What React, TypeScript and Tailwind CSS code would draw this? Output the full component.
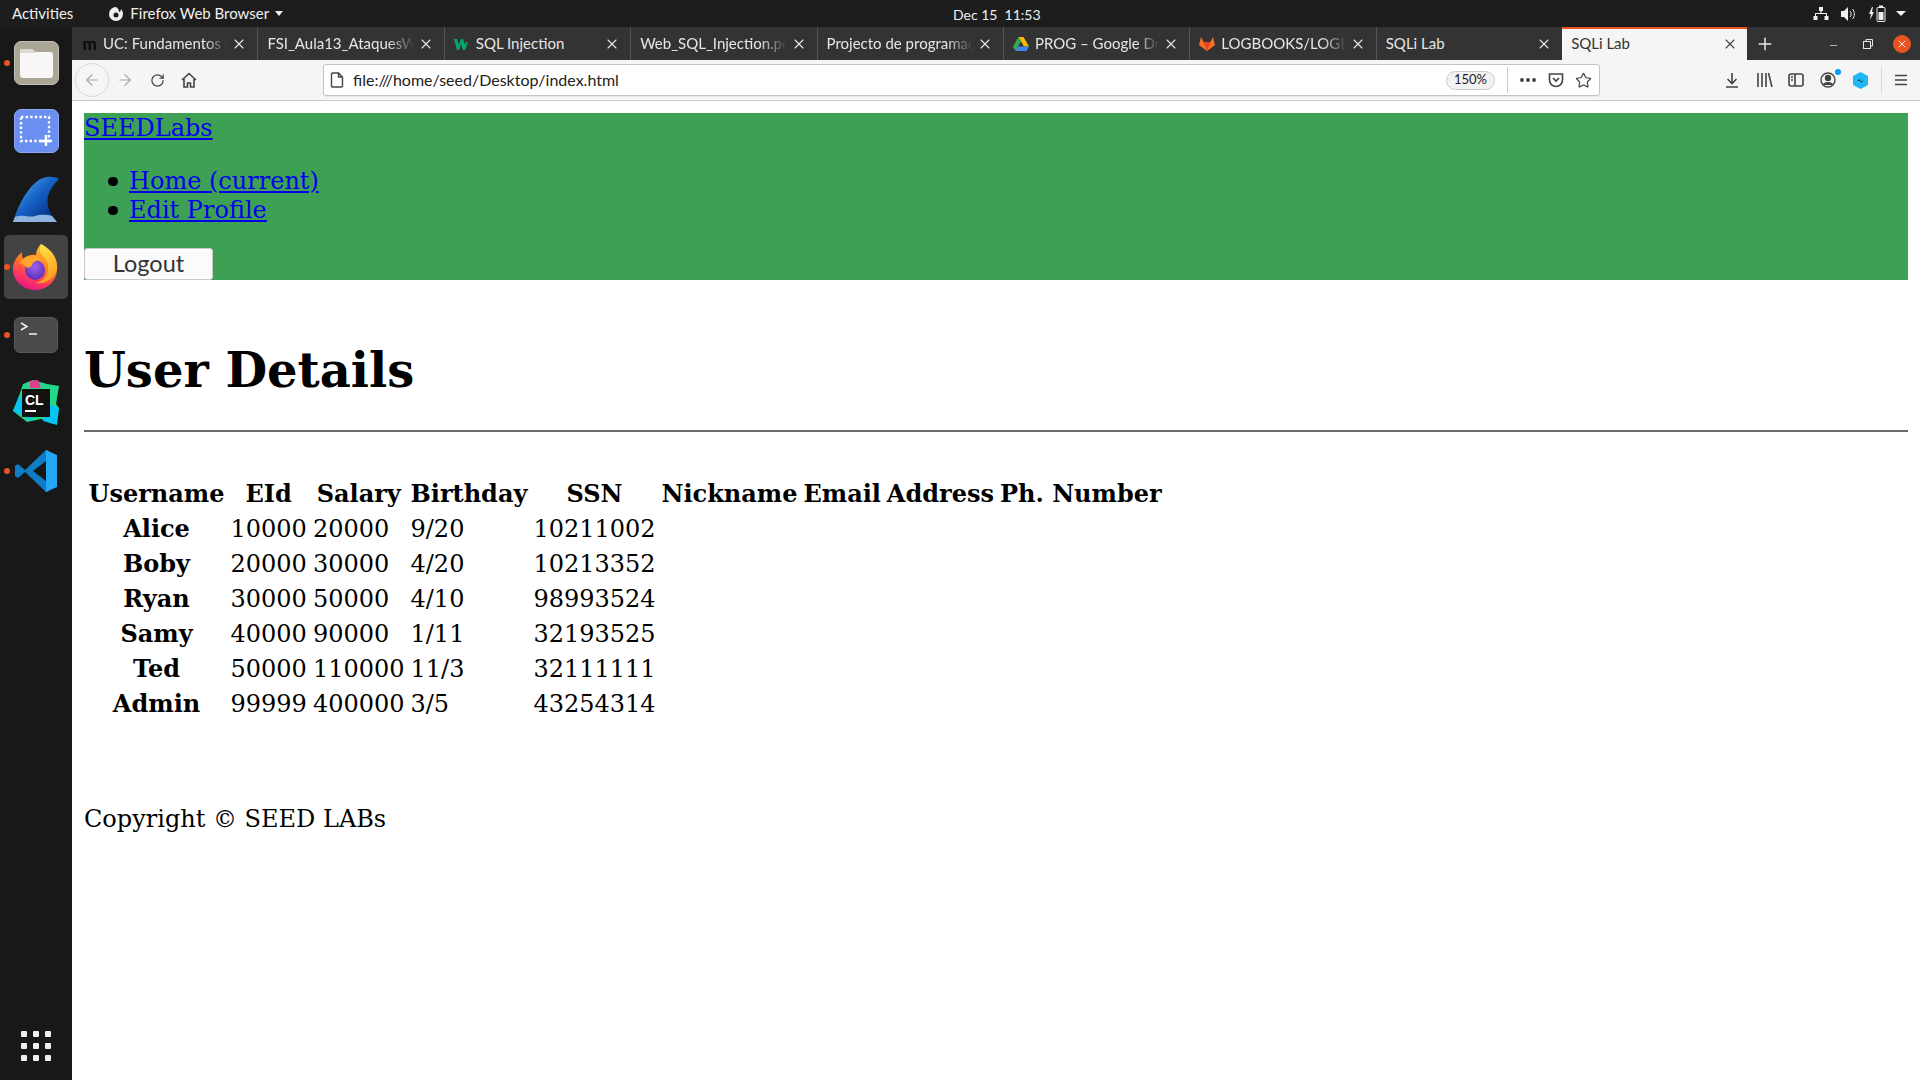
import { ArrowLeft, ArrowRight, RotateCw, Plus, X, Star, Minus } from 'lucide-react'

const uiFont = "font-['Lato','Noto_Sans',sans-serif]"

const FirefoxLogo = ({ size = 46 }: { size?: number }) => (
  <svg width={size} height={size} viewBox="0 0 46 46">
    <defs>
      <linearGradient id="ffOuter" x1="0.75" y1="0.05" x2="0.35" y2="1">
        <stop offset="0" stopColor="#ffc52e" />
        <stop offset="0.45" stopColor="#ff7a1f" />
        <stop offset="0.75" stopColor="#ff3a5c" />
        <stop offset="1" stopColor="#e31587" />
      </linearGradient>
      <linearGradient id="ffTail" x1="0.3" y1="0" x2="0.6" y2="1">
        <stop offset="0" stopColor="#ffe34a" />
        <stop offset="1" stopColor="#ff9a1f" />
      </linearGradient>
      <radialGradient id="ffGlobe" cx="0.5" cy="0.35" r="0.65">
        <stop offset="0" stopColor="#9a62ec" />
        <stop offset="1" stopColor="#5b2fb8" />
      </radialGradient>
    </defs>
    <path d="M28 0c8 5 16 13 16 25 0 12-10 21-22 21S0 37 0 25C0 18 4 12 9 8c0 3 0 5 1 7 3-3 8-5 13-4 0-4 2-8 5-11z" fill="url(#ffOuter)" />
    <circle cx="22" cy="26" r="10" fill="url(#ffGlobe)" />
    <path d="M28 0c-2 5-1 9 2 12 4 4 6 9 5 14-1 7-6 12-13 13 10 2 20-5 22-14 1-9-4-19-16-25z" fill="url(#ffTail)" />
    <path d="M7 18c3-5 10-7 15-6 3 1 6 3 7 5-4-1-7 0-9 2-1 1-2 2-1 3l-4 2c-3-2-6-4-8-6z" fill="#ffa52a" />
  </svg>
)

const DockIcons = [
  {
    dot: true,
    icon: (
      <div className="w-[45px] h-[44px] rounded-[7px] bg-[#aaa595] border border-[#c3bfb2] flex items-center justify-center">
        <svg width="33" height="29" viewBox="0 0 33 29">
          <path d="M2 0h10l3 3h15a3 3 0 0 1 3 3v20a3 3 0 0 1-3 3H3a3 3 0 0 1-3-3V2a2 2 0 0 1 2-2z" fill="#f8f7f5" />
          <path d="M0 2a2 2 0 0 1 2-2h10l3 3v1H0z" fill="#dcd8cd" />
        </svg>
      </div>
    ),
  },
  {
    dot: false,
    icon: (
      <div className="w-[45px] h-[44px] rounded-[7px] bg-[#6a8ff0] border border-[#8aa8f4] flex items-center justify-center">
        <svg width="34" height="32" viewBox="0 0 34 32">
          <rect x="2" y="2" width="28" height="24" fill="none" stroke="#fff" strokeWidth="2.4" strokeDasharray="2.4 2.2" />
          <path d="M27 20v11M21 26h12" stroke="#fff" strokeWidth="2.4" />
        </svg>
      </div>
    ),
  },
  {
    dot: false,
    icon: (
      <svg width="46" height="46" viewBox="0 0 46 46">
        <defs>
          <linearGradient id="sharkFin" x1="0.1" y1="0.15" x2="0.75" y2="0.8">
            <stop offset="0" stopColor="#4c9cec" />
            <stop offset="0.55" stopColor="#1560c4" />
            <stop offset="1" stopColor="#0a3a90" />
          </linearGradient>
        </defs>
        <path d="M46 3C42 0 30-1 22 7 12 16 5 30 0 46h44C37 38 33 30 35 20c2-7 6-12 11-17z" fill="url(#sharkFin)" />
        <path d="M2 41c8-3 14 1 20-1 7-2 13-1 17 0l5 6H0z" fill="#8fb4de" />
      </svg>
    ),
  },
  { dot: true, active: true, icon: <FirefoxLogo /> },
  {
    dot: true,
    icon: (
      <div className="w-[44px] h-[36px] rounded-[6px] bg-[#4a4a4a] border border-[#5a5a5a] relative">
        <svg width="24" height="16" viewBox="0 0 24 16" className="absolute left-[5px] top-[4px]">
          <path d="M1 1l6 3.5L1 8" fill="none" stroke="#f2f2f2" strokeWidth="1.5" />
          <path d="M9 12h8" stroke="#f2f2f2" strokeWidth="1.5" />
        </svg>
      </div>
    ),
  },
  {
    dot: false,
    icon: (
      <svg width="46" height="46" viewBox="0 0 46 46">
        <path d="M10 4L20 0l14 4 12 2-3 18 3 4-4 16-14-5-14 3L0 31 6 16z" fill="#21d789" />
        <path d="M0 31L6 16l8 10 6 15z" fill="#07c3f2" />
        <path d="M30 41l14 4 2-17-10-4z" fill="#07c3f2" />
        <path d="M17 1l8-1 3 8H17z" fill="#e0408f" />
        <rect x="9" y="9" width="28" height="28" fill="#111" />
        <text x="12" y="25" fill="#fff" fontSize="14" fontWeight="700" fontFamily="Liberation Sans, sans-serif">CL</text>
        <rect x="12" y="30" width="11" height="2" fill="#fff" />
      </svg>
    ),
  },
  {
    dot: true,
    icon: (
      <svg width="42" height="42" viewBox="0 0 42 42">
        <path d="M31 0L10 20 3 14 0 16v10l3 2 7-6 21 20 3-1V1z" fill="#0f7cc4" />
        <path d="M31 11v20L18 21z" fill="#161616" />
        <path d="M31 0l11 5v32l-11 5z" fill="#24a8f5" />
      </svg>
    ),
  },
]

const FaviconW3 = () => (
  <svg width="16" height="12" viewBox="0 0 16 12">
    <path d="M0 1h3l2 6 2-6h2l2 6 1-3h2l-3 8h-2L7 6l-2 6H3z" fill="#04aa6d" />
  </svg>
)

const FaviconDrive = () => (
  <svg width="16" height="14" viewBox="0 0 16 14">
    <path d="M5.5 0h5L16 9.5h-5z" fill="#fbbc04" />
    <path d="M5.5 0L0 9.5 2.5 14l5.5-9.5z" fill="#34a853" />
    <path d="M2.5 14h11L16 9.5H5z" fill="#4285f4" />
  </svg>
)

const FaviconGitlab = () => (
  <svg width="16" height="15" viewBox="0 0 16 15">
    <path d="M8 15L0 9l2-8 2.5 5h7L14 1l2 8z" fill="#fc6d26" />
    <path d="M8 15L4.5 6h7z" fill="#e24329" />
  </svg>
)

const FaviconMoodle = () => (
  <span className="font-bold text-[17px] leading-none text-[#0a0a0a] tracking-[-1px]">m</span>
)

const tabs = [
  { title: 'UC: Fundamentos de', icon: <FaviconMoodle /> },
  { title: 'FSI_Aula13_AtaquesWeb' },
  { title: 'SQL Injection', icon: <FaviconW3 />, noFade: true },
  { title: 'Web_SQL_Injection.pdf' },
  { title: 'Projecto de programação' },
  { title: 'PROG – Google Drive', icon: <FaviconDrive /> },
  { title: 'LOGBOOKS/LOGBOOK', icon: <FaviconGitlab /> },
  { title: 'SQLi Lab', noFade: true },
]

const users = [
  ['Alice', '10000', '20000', '9/20', '10211002'],
  ['Boby', '20000', '30000', '4/20', '10213352'],
  ['Ryan', '30000', '50000', '4/10', '98993524'],
  ['Samy', '40000', '90000', '1/11', '32193525'],
  ['Ted', '50000', '110000', '11/3', '32111111'],
  ['Admin', '99999', '400000', '3/5', '43254314'],
]

const headers = ['Username', 'EId', 'Salary', 'Birthday', 'SSN', 'Nickname', 'Email Address', 'Ph. Number']

const TopBar = () => (
  <div className={`h-[27px] bg-[#1d1d1d] text-[#f0f0f0] flex items-center text-[15px] relative ${uiFont}`}>
    <span className="ml-[12px]">Activities</span>
    <svg width="16" height="16" viewBox="0 0 16 16" className="ml-[35px]">
      <path d="M8 1a7 7 0 1 0 7 7c0-2-1-4-2-5 0 2-1 3-2 3 0-2-1-4-3-5z" fill="#f0f0f0" />
      <circle cx="8" cy="9" r="2.5" fill="#1d1d1d" />
    </svg>
    <span className="ml-[6px]">Firefox Web Browser</span>
    <span className="ml-[6px] w-0 h-0 border-x-[4.5px] border-x-transparent border-t-[5px] border-t-[#f0f0f0]" />
    <span className="absolute left-[953px] top-[4px] text-[14px]">Dec 15&nbsp; 11:53</span>
    <div className="ml-auto flex items-center gap-[11px] pr-[14px]">
      <svg width="16" height="16" viewBox="0 0 16 16" fill="#f0f0f0">
        <path d="M6 1h4v4H8.6v2H14v3h1.5v4h-4v-4H13V8H3v2h1.5v4h-4v-4H2V7h5.4V5H6z" />
      </svg>
      <svg width="17" height="16" viewBox="0 0 17 16">
        <path d="M1 5h3l4-4v14l-4-4H1z" fill="#f0f0f0" />
        <path d="M10 5c1.5 1.5 1.5 4.500 0 6M12.500 3c2.500 2.500 2.500 7.500 0 10" fill="none" stroke="#f0f0f0" strokeWidth="1" />
      </svg>
      <svg width="20" height="18" viewBox="0 0 20 18" className="-mr-[3px]">
        <path d="M4 2L1 9h2l-1 6 4-8H4l1-5z" fill="#f0f0f0" />
        <rect x="9" y="2.500" width="8" height="14" rx="1" fill="none" stroke="#f0f0f0" />
        <rect x="11" y="0.500" width="4" height="2" fill="#f0f0f0" />
        <rect x="10.500" y="7" width="5" height="8" fill="#f0f0f0" />
      </svg>
      <span className="w-0 h-0 border-x-[5px] border-x-transparent border-t-[5px] border-t-[#f0f0f0]" />
    </div>
  </div>
)

const Dock = () => (
  <div className="w-[72px] shrink-0 bg-[#181818] flex flex-col pt-[2px]">
    {DockIcons.map((item, i) => (
      <div key={i} className="relative h-[68px] flex items-center justify-center">
        {item.active && <div className="absolute left-[4px] top-[2px] w-[64px] h-[64px] rounded-[5px] bg-[#434343]" />}
        {item.dot && <span className="absolute left-[4px] top-[31px] w-[6px] h-[6px] rounded-full bg-[#e9541f]" />}
        <div className="relative">{item.icon}</div>
      </div>
    ))}
    <div className="mt-auto mb-[19px] grid grid-cols-3 gap-[6px] w-[30px] mx-auto">
      {Array.from({ length: 9 }).map((_, i) => (
        <span key={i} className="w-[6px] h-[6px] rounded-[1px] bg-[#f0f0f0]" />
      ))}
    </div>
  </div>
)

const TabBar = () => (
  <div className={`h-[33px] bg-[#333333] flex items-stretch text-[15px] ${uiFont}`}>
    {tabs.map((tab, i) => (
      <div key={i} className="w-[186.4px] shrink-0 flex items-center pl-[9px] pr-[10px] border-r border-[#555555] text-[#e6e6e6]">
        {tab.icon && <span className="w-[16px] mr-[6px] flex items-center justify-center">{tab.icon}</span>}
        <span className={`flex-1 whitespace-nowrap overflow-hidden ${tab.noFade ? '' : '[mask-image:linear-gradient(to_right,black_82%,transparent)]'}`}>
          {tab.title}
        </span>
        <X size={16} strokeWidth={1.6} className="ml-[4px] text-[#e6e6e6]" />
      </div>
    ))}
    <div className="w-[185px] shrink-0 -ml-[1px] flex items-center pl-[9px] pr-[9px] bg-[#f5f5f5] border-t-[2px] border-[#e9541f] text-[#333333]">
      <span className="flex-1 whitespace-nowrap -mt-[2px]">SQLi Lab</span>
      <X size={16} strokeWidth={1.6} className="text-[#444444] -mt-[2px]" />
    </div>
    <div className="flex items-center pl-[8px] text-[#e6e6e6]">
      <Plus size={20} strokeWidth={1.8} />
    </div>
    <div className="ml-auto flex items-center pr-[9px] text-[#e6e6e6]">
      <Minus size={11} strokeWidth={1.5} className="mr-[24px] mt-[3px]" />
      <svg width="10" height="10" viewBox="0 0 10 10" className="mr-[20px]">
        <rect x="0.500" y="2.500" width="7" height="7" fill="none" stroke="#e6e6e6" />
        <path d="M3 2.500V0.500h6.500V7H8" fill="none" stroke="#e6e6e6" />
      </svg>
      <span className="w-[18px] h-[18px] rounded-full bg-[#e9541f] flex items-center justify-center">
        <X size={12} strokeWidth={1.8} className="text-white" />
      </span>
    </div>
  </div>
)

const NavBar = () => (
  <div className={`h-[41px] bg-[#f5f5f5] border-b border-[#c9c9c9] flex items-center text-[#444444] ${uiFont}`}>
    <span className="ml-[3px] w-[34px] h-[34px] rounded-full border border-[#d8d8d8] flex items-center justify-center">
      <ArrowLeft size={18} strokeWidth={1.6} className="text-[#a8a8a8]" />
    </span>
    <span className="w-[32px] flex justify-center">
      <ArrowRight size={18} strokeWidth={1.6} className="text-[#a8a8a8]" />
    </span>
    <span className="w-[32px] flex justify-center">
      <RotateCw size={15} strokeWidth={2} />
    </span>
    <span className="w-[32px] flex justify-center">
      <svg width="16" height="16" viewBox="0 0 16 16" fill="none" stroke="#444444" strokeWidth="1.6">
        <path d="M1 8l7-6.500L15 8M3 7v8h3.500v-4h3v4H13V7" />
      </svg>
    </span>
    <div className="ml-[118px] w-[1277px] h-[32px] bg-white border border-[#c4c4c4] rounded-[3px] flex items-center shadow-[0_1px_1px_rgba(0,0,0,0.06)]">
      <svg width="14" height="16" viewBox="0 0 14 16" fill="none" stroke="#444444" strokeWidth="1.4" className="ml-[6px]">
        <path d="M2.500 1h6L12.500 5v9a1 1 0 0 1-1 1h-9a1 1 0 0 1-1-1V2a1 1 0 0 1 1-1zM8.500 1v4h4" />
      </svg>
      <span className="ml-[9px] text-[16px] text-[#222222]">file:///home/seed/Desktop/index.html</span>
      <span className="ml-auto w-[49px] h-[19px] rounded-full border border-[#cccccc] bg-[#f2f2f2] text-[13px] flex items-center justify-center text-[#222222]">150%</span>
      <span className="w-px h-[26px] bg-[#c9c9c9] ml-[12px]" />
      <span className="ml-[12px] flex gap-[2px]">
        <i className="w-[4px] h-[4px] rounded-full bg-[#444444]" />
        <i className="w-[4px] h-[4px] rounded-full bg-[#444444]" />
        <i className="w-[4px] h-[4px] rounded-full bg-[#444444]" />
      </span>
      <svg width="16" height="16" viewBox="0 0 16 16" fill="none" stroke="#444444" strokeWidth="1.6" className="ml-[12px]">
        <path d="M1.500 2h13v6a6.500 6.500 0 0 1-13 0zM5 6l3 3 3-3" />
      </svg>
      <Star size={17} strokeWidth={1.7} className="ml-[11px] mr-[7px]" />
    </div>
    <div className="ml-auto flex items-center">
      <span className="w-[32px] flex justify-center">
        <svg width="16" height="16" viewBox="0 0 16 16" fill="none" stroke="#444444" strokeWidth="1.6">
          <path d="M8 1v10M3.500 7L8 11.500 12.500 7M2 15h12" />
        </svg>
      </span>
      <span className="w-[32px] flex justify-center">
        <svg width="17" height="16" viewBox="0 0 17 16" fill="none" stroke="#444444" strokeWidth="1.6">
          <path d="M2 1v14M6 1v14M10 1v14M12.500 1l3.500 14" />
        </svg>
      </span>
      <span className="w-[32px] flex justify-center">
        <svg width="16" height="16" viewBox="0 0 16 16" fill="none" stroke="#444444" strokeWidth="1.6">
          <rect x="1" y="2" width="14" height="12" rx="2" />
          <path d="M7 2v12M3 5h2M3 8h2" />
        </svg>
      </span>
      <span className="w-[32px] flex justify-center relative">
        <svg width="16" height="16" viewBox="0 0 16 16" fill="none" stroke="#444444" strokeWidth="1.4">
          <circle cx="8" cy="8" r="7" />
          <circle cx="8" cy="6" r="2.500" fill="#444444" />
          <path d="M3.500 13c1-3 8-3 9 0" fill="#444444" />
        </svg>
        <span className="absolute right-[3px] -top-[3px] w-[6px] h-[6px] rounded-full bg-[#0a9bf0]" />
      </span>
      <span className="w-[32px] flex justify-center">
        <svg width="15" height="17" viewBox="0 0 15 17">
          <path d="M7.500 0L15 4v9l-7.500 4L0 13V4z" fill="#20b8f5" />
          <path d="M4 9l3-2v3l4-2-3 3V9z" fill="#1d3a5c" />
        </svg>
      </span>
      <span className="w-px h-[26px] bg-[#d8d8d8] ml-[5px]" />
      <span className="w-[38px] flex justify-center">
        <svg width="14" height="14" viewBox="0 0 14 14" stroke="#444444" strokeWidth="1.6">
          <path d="M1 2.500h12M1 7h12M1 11.500h12" />
        </svg>
      </span>
    </div>
  </div>
)

const Page = () => (
  <div className="flex-1 bg-white px-[12px] pt-[12px] font-['DejaVu_Serif',serif] text-[24px] leading-[29px] text-black overflow-hidden">
    <div className="bg-[#3ea055] h-[167px] pt-[1px]">
      <a href="#" className="text-[#0000ee] underline">SEEDLabs</a>
      <ul className="pl-[24px] mt-[24px] mb-[23px]">
        <li className="h-[29px] flex items-center">
          <span className="w-[9.5px] h-[9.5px] rounded-full bg-black mr-[11.5px]" />
          <a href="#" className="text-[#0000ee] underline">Home (current)</a>
        </li>
        <li className="h-[29px] flex items-center">
          <span className="w-[9.5px] h-[9.5px] rounded-full bg-black mr-[11.5px]" />
          <a href="#" className="text-[#0000ee] underline">Edit Profile</a>
        </li>
      </ul>
      <button className={`block w-[129px] h-[32px] bg-[#fbfbfb] border border-[#c8c8c8] rounded-[3px] text-[#333333] text-[23.5px] leading-none ${uiFont}`}>
        Logout
      </button>
    </div>
    <h1 className="text-[48px] leading-[56px] font-bold mt-[62px]">User Details</h1>
    <hr className="mt-[32px] border-t-2 border-[#6a6a6a]" />
    <table className="mt-[42px] border-separate border-spacing-[3px]">
      <thead>
        <tr>
          {headers.map((h) => (
            <th key={h} className={`p-[1.5px] font-bold text-center ${h === 'Email Address' ? '[word-spacing:-2.5px]' : ''}`}>{h}</th>
          ))}
        </tr>
      </thead>
      <tbody>
        {users.map((row) => (
          <tr key={row[0]}>
            <th className="p-[1.5px] font-bold text-center">{row[0]}</th>
            {row.slice(1).map((val, i) => (
              <td key={i} className="pt-[2.5px] pb-[0.5px] px-[1.5px] font-normal">{val}</td>
            ))}
            <td /><td /><td />
          </tr>
        ))}
      </tbody>
    </table>
    <p className="mt-[83px]">Copyright © SEED LABs</p>
  </div>
)

const App = () => {
  return (
    <div className="w-[1920px] h-[1080px] flex flex-col overflow-hidden">
      <TopBar />
      <div className="flex-1 flex min-h-0">
        <Dock />
        <div className="flex-1 flex flex-col min-w-0">
          <TabBar />
          <NavBar />
          <Page />
        </div>
      </div>
    </div>
  )
}

export default App
